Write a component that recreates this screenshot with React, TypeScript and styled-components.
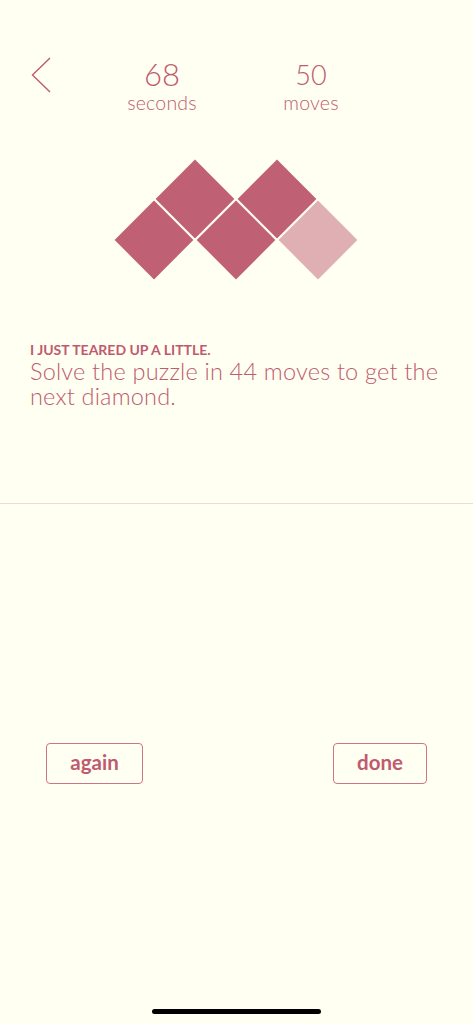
import React from "react";
import styled, { createGlobalStyle } from "styled-components";

const ink = "#c05a71";
const bg = "#fffff2";

const Global = createGlobalStyle`
  html, body { margin: 0; padding: 0; background: ${bg}; }
  body { font-family: "Lato", "Open Sans", sans-serif; }
`;

const Screen = styled.div`
  width: 473px;
  height: 1024px;
  background: ${bg};
  display: flex;
  flex-direction: column;
  overflow: hidden;
  color: ${ink};
`;

const Header = styled.header`
  display: flex;
  align-items: flex-start;
  padding: 57px 0 0 31px;
`;

const BackButton = styled.button`
  border: 0;
  background: none;
  padding: 0;
  width: 20px;
  height: 36px;
  cursor: pointer;
  display: block;
`;

const Stats = styled.div`
  display: flex;
  gap: 49px;
  margin-left: 61px;
`;

const Stat = styled.div`
  width: 100px;
  display: flex;
  flex-direction: column;
  align-items: center;
`;

const StatValue = styled.div<{ $size: number; $drop: number }>`
  height: 34px;
  box-sizing: border-box;
  padding-top: ${(p) => p.$drop}px;
  font-size: ${(p) => p.$size}px;
  font-weight: 300;
  line-height: ${(p) => 34 - p.$drop}px;
`;

const StatLabel = styled.div`
  font-size: 19.5px;
  font-weight: 300;
  line-height: 20px;
  margin-top: 1.5px;
  letter-spacing: 0.2px;
`;

const Puzzle = styled.svg`
  display: block;
  margin: 46px auto 0;
`;

const Message = styled.section`
  padding: 0 30px;
  margin-top: 61px;
`;

const Kicker = styled.div`
  font-size: 14px;
  font-weight: 700;
  letter-spacing: 0;
  line-height: 16px;
  text-transform: uppercase;
`;

const Body = styled.p`
  margin: 1px 0 0;
  font-size: 23.5px;
  font-weight: 300;
  line-height: 25px;
  letter-spacing: 0.2px;
`;

const Divider = styled.hr`
  border: 0;
  height: 1px;
  background: #efdcd3;
  margin: 0;
  margin-top: 94px;
`;

const Actions = styled.div`
  display: flex;
  justify-content: space-between;
  padding: 0 46px;
  margin-top: 239px;
`;

const ActionButton = styled.button<{ $width: number }>`
  width: ${(p) => p.$width}px;
  height: 41px;
  border: 1.5px solid #cf7388;
  border-radius: 4px;
  background: transparent;
  color: ${ink};
  font-family: "Lato", sans-serif;
  font-weight: 700;
  font-size: 20.5px;
  padding: 0 0 3px;
  cursor: pointer;
`;

const HomeIndicator = styled.div`
  width: 169px;
  height: 5px;
  border-radius: 3px;
  background: #000;
  margin: auto auto 10px;
`;

type Tile = { col: number; row: number; solved: boolean };

const tiles: Tile[] = [
  { col: 0, row: 1, solved: true },
  { col: 1, row: 0, solved: true },
  { col: 2, row: 1, solved: true },
  { col: 3, row: 0, solved: true },
  { col: 4, row: 1, solved: false },
];

const step = 41;
const half = 39.4;

function Diamond({ col, row, solved }: Tile) {
  const cx = 40 + step * col;
  const cy = 40 + step * row;
  const pts = `${cx},${cy - half} ${cx + half},${cy} ${cx},${cy + half} ${cx - half},${cy}`;
  return <polygon points={pts} fill={solved ? "#c06075" : "#e0afb3"} />;
}

export default function App() {
  return (
    <Screen>
      <Global />
      <Header>
        <BackButton aria-label="back">
          <svg width="20" height="36" viewBox="0 0 20 36">
            <path d="M19 1 L1.5 18 L19 35" fill="none" stroke={ink} strokeWidth="1.4" />
          </svg>
        </BackButton>
        <Stats>
          <Stat>
            <StatValue $size={31} $drop={0}>68</StatValue>
            <StatLabel>seconds</StatLabel>
          </Stat>
          <Stat>
            <StatValue $size={27} $drop={2}>50</StatValue>
            <StatLabel>moves</StatLabel>
          </Stat>
        </Stats>
      </Header>
      <Puzzle width="245" height="122" viewBox="0 0 245 122">
        {tiles.map((t) => (
          <Diamond key={`${t.col}-${t.row}`} {...t} />
        ))}
      </Puzzle>
      <Message>
        <Kicker>I just teared up a little.</Kicker>
        <Body>Solve the puzzle in 44 moves to get the next diamond.</Body>
      </Message>
      <Divider />
      <Actions>
        <ActionButton $width={97}>again</ActionButton>
        <ActionButton $width={94}>done</ActionButton>
      </Actions>
      <HomeIndicator />
    </Screen>
  );
}
